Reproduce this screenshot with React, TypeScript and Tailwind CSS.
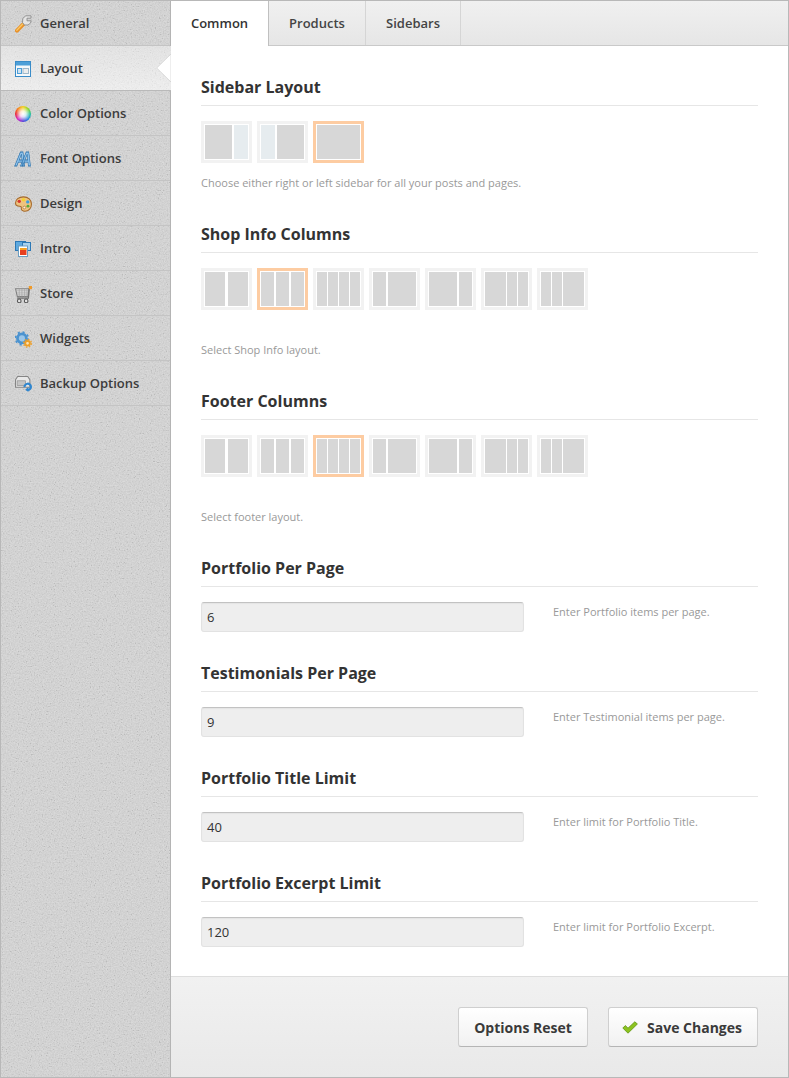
import React from "react";

const Noise = ({ id, opacity = 0.12 }: { id: string; opacity?: number }) => (
  <svg className="absolute inset-0 w-full h-full pointer-events-none" style={{ opacity }} aria-hidden="true">
    <filter id={id} x="0" y="0" width="100%" height="100%">
      <feTurbulence type="fractalNoise" baseFrequency="0.75" numOctaves="2" seed="4" stitchTiles="stitch" />
      <feColorMatrix type="matrix" values="0.9 0.9 0.9 0 -0.85  0.9 0.9 0.9 0 -0.85  0.9 0.9 0.9 0 -0.85  0 0 0 0 1" />
    </filter>
    <rect width="100%" height="100%" filter={`url(#${id})`} />
  </svg>
);

const Wrench = () => (
  <svg width="17" height="18" viewBox="0 0 17 18" className="shrink-0">
    <path d="M2 15.6 8.6 8.8" stroke="#e8912a" strokeWidth="4" strokeLinecap="round" />
    <path d="M1.8 15.2 7.8 9" stroke="#fbc964" strokeWidth="1.3" strokeLinecap="round" />
    <path d="M7.5 7.5 7.8 3.4 10.8 .8H16V3.2H12V5.8H16.2L15.6 8 13 10 9.4 10Z" fill="#e4e4e4" stroke="#8b8b8b" strokeWidth="0.9" />
  </svg>
);
const LayoutIcon = () => (
  <svg width="16" height="16" viewBox="0 0 16 16" className="shrink-0">
    <rect x="0.5" y="0.5" width="15" height="15" fill="#f4f8fb" stroke="#3a8cc8" />
    <rect x="1" y="1" width="14" height="3.5" fill="#4d9fd8" />
    <rect x="2.5" y="7.5" width="4" height="5" fill="#cfe3f2" stroke="#4d9fd8" />
    <rect x="8" y="7.5" width="5.5" height="5" fill="#ececec" stroke="#9db8cb" />
  </svg>
);
const Wheel = () => (
  <span className="block shrink-0 w-[16px] h-[16px] rounded-full bg-[conic-gradient(#f5d020,#8ed62a,#25c2a0,#2a8be0,#5b3fd8,#d62ac4,#e8283a,#f5801f,#f5d020)] relative">
    <span className="absolute inset-[1px] rounded-full bg-[radial-gradient(circle,#ffffff_0%,#ffffffd0_30%,#ffffff00_75%)]" />
  </span>
);
const FontIcon = () => (
  <span className="block shrink-0 w-[16px] h-[16px] scale-y-[1.35] whitespace-nowrap font-['Liberation_Sans',sans-serif] font-bold italic text-[15px] leading-[16px] tracking-[-5px] text-[#8fc3ec] [-webkit-text-stroke:0.6px_#2f74ad]" aria-hidden="true">
    AA
  </span>
);
const Palette = () => (
  <svg width="17" height="16" viewBox="0 0 16 15" className="shrink-0">
    <path d="M8 .8C3.4.8.5 3.4.5 6.6c0 2.6 2.2 3 3.8 3 1.2 0 1.8.6 1.6 1.8-.2 1.8 1.2 2.9 3.4 2.9 3.8 0 6.2-3 6.2-6.8C15.5 3.6 12.4.8 8 .8Z" fill="#eec37f" stroke="#a5682a" />
    <circle cx="4" cy="5" r="1.6" fill="#d6362c" />
    <circle cx="8" cy="3.5" r="1.6" fill="#f4d22e" />
    <circle cx="12" cy="5.5" r="1.6" fill="#3c9de0" />
    <circle cx="12.2" cy="9.5" r="1.4" fill="#5aa83a" />
    <circle cx="8.8" cy="10.8" r="1.3" fill="#fbeed8" stroke="#a5682a" strokeWidth="0.6" />
  </svg>
);
const Intro = () => (
  <svg width="16" height="16" viewBox="0 0 16 16" className="shrink-0">
    <rect x="0.5" y="0.5" width="10" height="9" fill="#5da9e0" stroke="#2d78b5" />
    <rect x="7.5" y="1.5" width="8" height="8" fill="#a8d2ee" stroke="#2d78b5" />
    <rect x="3.5" y="5" width="9" height="10.5" fill="#fff" stroke="#6d9dc0" />
    <rect x="5" y="7" width="6.5" height="7" fill="#e8401f" />
    <rect x="5" y="7" width="6.5" height="2" fill="#f7a11f" />
  </svg>
);
const Cart = () => (
  <svg width="17" height="17" viewBox="0 0 16 16" className="shrink-0">
    <path d="M.5 2.5H13L12.2 10H2.2Z" fill="#dedede" stroke="#808080" />
    <path d="M1.5 4.5H12.6M1.8 6.5H12.4M2 8.4H12.2M4 2.5V10M6.5 2.5V10M9 2.5V10M11.2 2.5V10" stroke="#a0a0a0" strokeWidth="0.6" />
    <path d="M13.5 2 12.6 11.5H2" stroke="#6f6f6f" fill="none" strokeWidth="1.2" />
    <circle cx="4" cy="14" r="1.7" fill="#e4e4e4" stroke="#555" />
    <circle cx="10.5" cy="14" r="1.7" fill="#e4e4e4" stroke="#555" />
    <rect x="13" y="0" width="3" height="3" fill="#ef9a2a" />
  </svg>
);
const Gears = () => (
  <svg width="17" height="17" viewBox="0 0 16 16" className="shrink-0">
    <circle cx="6.5" cy="7" r="4.2" fill="#9cc6e8" stroke="#4c93cf" strokeWidth="2.6" />
    <circle cx="6.5" cy="7" r="6" fill="none" stroke="#4c93cf" strokeWidth="1.6" strokeDasharray="2 2.7" />
    <circle cx="11.8" cy="11.6" r="2.2" fill="#fbe3b6" stroke="#ee9f27" strokeWidth="1.8" />
    <circle cx="11.8" cy="11.6" r="3.7" fill="none" stroke="#ee9f27" strokeWidth="1.1" strokeDasharray="1.5 1.4" />
  </svg>
);
const Backup = () => (
  <svg width="17" height="16" viewBox="0 0 16 15" className="shrink-0">
    <path d="M.5 3.5 2.5.5H12L14 3.5V10.5H.5Z" fill="#e8e8e8" stroke="#858585" />
    <rect x="2" y="4.5" width="8" height="4.5" fill="#c4c4c4" stroke="#8a8a8a" strokeWidth="0.6" />
    <path d="M9 10.5A3 3 0 1 1 12 13.2" fill="none" stroke="#2f86cf" strokeWidth="2" />
    <path d="M12.6 10.4V15L9.6 12.8Z" fill="#2f86cf" />
  </svg>
);

const items: [string, React.ReactNode][] = [
  ["General", <Wrench />],
  ["Layout", <LayoutIcon />],
  ["Color Options", <Wheel />],
  ["Font Options", <FontIcon />],
  ["Design", <Palette />],
  ["Intro", <Intro />],
  ["Store", <Cart />],
  ["Widgets", <Gears />],
  ["Backup Options", <Backup />],
];

const Thumb = ({ cols, on, light }: { cols: number[]; on?: boolean; light?: number }) => (
  <div className={`w-[51px] h-[42px] border-[3px] bg-white p-px flex gap-[2px] ${on ? "border-[#fdcca2]" : "border-[#f2f2f2]"}`}>
    {cols.map((w, i) => (
      <div key={i} className={`h-full ${i === light ? "bg-[#e6ecef]" : "bg-[#d7d7d7]"}`} style={{ width: w }} />
    ))}
  </div>
);

const ThumbTight = ({ cols, on }: { cols: number[]; on?: boolean }) => (
  <div className={`w-[51px] h-[42px] border-[3px] bg-white p-px flex gap-px ${on ? "border-[#fdcca2]" : "border-[#f2f2f2]"}`}>
    {cols.map((w, i) => (
      <div key={i} className="h-full bg-[#d7d7d7]" style={{ width: w }} />
    ))}
  </div>
);

const Row = ({ sel }: { sel: number }) => (
  <div className="flex gap-[5px]">
    <div className="w-[51px] h-[42px] border-[3px] border-[#f2f2f2] bg-white p-px flex gap-[3px]">
      <div className="h-full w-[20px] bg-[#d7d7d7]" />
      <div className="h-full w-[20px] bg-[#d7d7d7]" />
    </div>
    <Thumb cols={[13, 13, 13]} on={sel === 1} />
    <ThumbTight cols={[10, 10, 10, 10]} on={sel === 2} />
    <Thumb cols={[13, 28]} />
    <Thumb cols={[28, 13]} />
    <ThumbTight cols={[21, 10, 10]} />
    <ThumbTight cols={[10, 10, 21]} />
  </div>
);

const Title = ({ children }: { children: React.ReactNode }) => (
  <h3 className="h-[31px] mb-[15px] border-b border-[#e6e6e6] text-[16px] leading-[24px] font-bold text-[#333]">{children}</h3>
);

const Help = ({ children, className = "" }: { children: React.ReactNode; className?: string }) => (
  <p className={`text-[11px] leading-[18px] text-[#999] ${className}`}>{children}</p>
);

const Field = ({ title, value, help }: { title: string; value: string; help: string }) => (
  <section className="mb-[29px]">
    <Title>{title}</Title>
    <div className="flex">
      <div className="w-[323px] h-[30px] rounded-[3px] bg-[#eeeeee] border border-[#e2e2e2] border-t-[#c2c2c2] pl-[5px] text-[13px] leading-[29px] text-[#333] shadow-[inset_0_1px_1px_rgba(0,0,0,0.04)]">{value}</div>
      <Help className="ml-[29px] mt-px">{help}</Help>
    </div>
  </section>
);

export default function App() {
  return (
    <div className="w-[789px] h-[1078px] flex border border-[#b8b8b8] bg-white font-['Open_Sans',sans-serif] overflow-hidden">
      <aside className="relative w-[170px] shrink-0 bg-[#d6d6d6] border-r border-[#b4b4b4]">
        <Noise id="n1" />
        <ul className="relative">
          {items.map(([label, icon]) => {
            const active = label === "Layout";
            return (
              <li
                key={label}
                className={`relative h-[45px] flex items-center pl-[14px] pt-[2px] gap-[9px] text-[13px] font-semibold text-[#3c3c3c] border-b ${
                  active
                    ? "bg-gradient-to-b from-[#e6e6e6] to-[#f1f1f1] border-[#b9b9b9] mr-[-1px]"
                    : "border-[#c4c4c4]"
                }`}
              >
                {active && <Noise id="n2" opacity={0.07} />}
                <span className="relative w-[16px] h-[18px] flex items-center justify-start shrink-0">{icon}</span>
                <span className="relative">{label}</span>
                {active && (
                  <svg className="absolute right-0 top-[8px]" width="15" height="28" viewBox="0 0 15 28" aria-hidden="true">
                    <path d="M15 0 .7 14 15 28Z" fill="#fff" stroke="#d0d0d0" strokeWidth="0.7" />
                  </svg>
                )}
              </li>
            );
          })}
        </ul>
      </aside>
      <main className="flex-1 min-w-0 flex flex-col">
        <nav className="h-[45px] flex shrink-0 bg-gradient-to-b from-[#f0f0f0] to-[#e6e6e6] border-b border-[#c9c9c9] text-[13px] font-semibold text-[#444]">
          <div className="w-[98px] h-[45px] bg-white border-r border-[#c0c0c0] flex items-center justify-center text-[#333]">Common</div>
          <div className="w-[97px] pt-px border-r border-[#d5d5d5] flex items-center justify-center">Products</div>
          <div className="w-[95px] pt-px border-r border-[#d5d5d5] flex items-center justify-center">Sidebars</div>
        </nav>
        <div className="flex-1 pt-[29px] pl-[30px] pr-[30px]">
          <section className="mb-[30px]">
            <Title>Sidebar Layout</Title>
            <div className="flex gap-[5px]">
              <Thumb cols={[27, 14]} light={1} />
              <Thumb cols={[14, 27]} light={0} />
              <Thumb cols={[43]} on />
            </div>
            <Help className="mt-[11px]">Choose either right or left sidebar for all your posts and pages.</Help>
          </section>
          <section className="mb-[30px]">
            <Title>Shop Info Columns</Title>
            <Row sel={1} />
            <Help className="mt-[31px]">Select Shop Info layout.</Help>
          </section>
          <section className="mb-[30px]">
            <Title>Footer Columns</Title>
            <Row sel={2} />
            <Help className="mt-[31px]">Select footer layout.</Help>
          </section>
          <Field title="Portfolio Per Page" value="6" help="Enter Portfolio items per page." />
          <Field title="Testimonials Per Page" value="9" help="Enter Testimonial items per page." />
          <Field title="Portfolio Title Limit" value="40" help="Enter limit for Portfolio Title." />
          <Field title="Portfolio Excerpt Limit" value="120" help="Enter limit for Portfolio Excerpt." />
        </div>
        <footer className="h-[101px] shrink-0 border-t border-[#dedede] bg-gradient-to-b from-[#f1f1f1] to-[#e9e9e9] flex items-start justify-end gap-[20px] pt-[30px] pr-[30px] text-[14px] font-bold text-[#3a3a3a]">
          <button className="w-[130px] h-[40px] rounded-[3px] border border-[#cfcfcf] border-b-[#b5b5b5] bg-gradient-to-b from-white to-[#f1f1f1]">Options Reset</button>
          <button className="w-[150px] h-[40px] pr-[2px] rounded-[3px] border border-[#cfcfcf] border-b-[#b5b5b5] bg-gradient-to-b from-white to-[#f1f1f1] flex items-center justify-center gap-[9px]">
            <svg width="16" height="13" viewBox="0 0 16 13" aria-hidden="true">
              <path d="M.8 7 3.4 4.6 6 7.2 12.8.8 15.4 3 6 12.2Z" fill="#8cc31f" stroke="#5f9412" strokeWidth="0.8" />
            </svg>
            Save Changes
          </button>
        </footer>
      </main>
    </div>
  );
}
